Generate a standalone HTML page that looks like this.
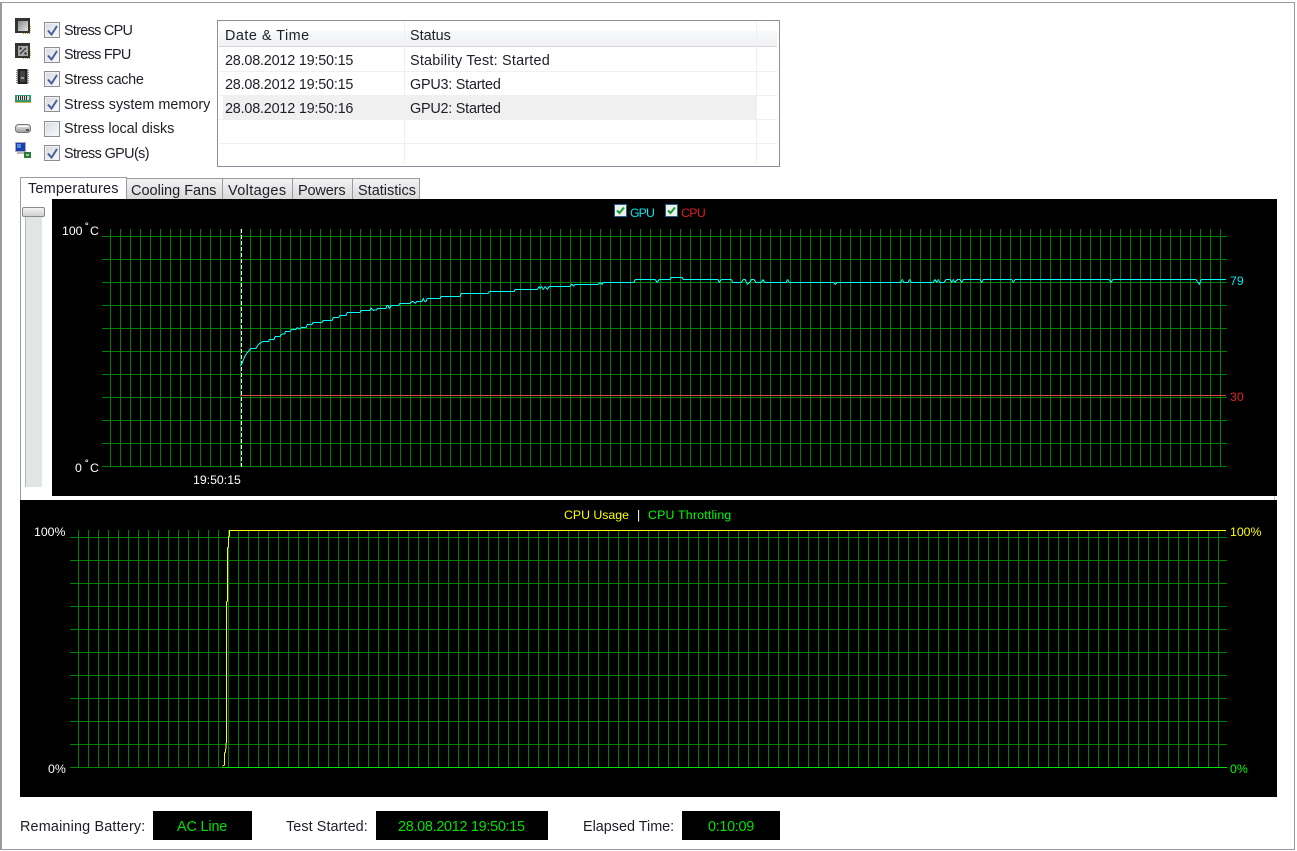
<!DOCTYPE html>
<html>
<head>
<meta charset="utf-8">
<style>
html,body{margin:0;padding:0;background:#fff}
#p{position:relative;width:1297px;height:851px;overflow:hidden;background:#fff;font-family:"Liberation Sans",sans-serif;color:#1e1e28}
#p div,#p span.t,#p svg{position:absolute}
.frame{left:0;top:2px;width:1292px;height:846px;border:1px solid #9a9aa4;border-left-width:2px}
.t{white-space:nowrap;line-height:20px;font-size:14.4px}
.s{white-space:nowrap;line-height:16px;font-size:12.3px;color:#fff}
.cb{left:44px;width:14px;height:14px;border:1px solid #8e8f8f;background:linear-gradient(135deg,#d5d9df,#eef1f4 70%,#fafafa);box-shadow:inset 0 0 0 1px #f2f2f2}
.blk{background:#000}
.hg{background:repeating-linear-gradient(180deg,#008000 0 1px,transparent 1px 23px)}
.vg{background:repeating-linear-gradient(90deg,#008000 0 1px,transparent 1px 10px)}
.tab{top:178px;height:21px;border:1px solid #9a9aa4;border-bottom:0;box-sizing:border-box;background:linear-gradient(180deg,#f2f2f2,#d9d9d9)}
.lg{top:204px;width:11px;height:11px;border:1px solid #2b5a8c;background:#e9f1ea}
</style>
</head>
<body>
<div id="p">
<div class="frame"></div>

<!-- side icons -->
<svg style="left:15px;top:18px" width="16" height="16" viewBox="0 0 16 16"><defs><linearGradient id="g1" x1="0" y1="0" x2="1" y2="1"><stop offset="0" stop-color="#8a8a8a"/><stop offset="1" stop-color="#e4e4e4"/></linearGradient></defs><rect width="15" height="15" fill="#333"/><rect x="3" y="3" width="10" height="10" fill="url(#g1)"/><path d="M15.5 8V14M8 15.5H15" stroke="#d99a2a" stroke-dasharray="1 1"/></svg>
<svg style="left:15px;top:43px" width="16" height="16" viewBox="0 0 16 16"><rect width="15" height="15" fill="#333"/><rect x="3" y="3" width="10" height="10" fill="#a8a8a8"/><path d="M5 11L11 5M5 5h1v1H5zM10 10h1v1h-1z" stroke="#222" fill="none"/><path d="M15.5 8V14M8 15.5H15" stroke="#c9a04a" stroke-dasharray="1 1"/></svg>
<svg style="left:16px;top:69px" width="14" height="16" viewBox="0 0 14 16"><rect x="1.5" width="10" height="15" fill="#222"/><rect x="4" y="2" width="5" height="11" fill="#444"/><rect x="5" y="8" width="3" height="2" fill="#999"/><path d="M.5 1V15M12.5 1V15" stroke="#888" stroke-dasharray="1 1"/></svg>
<svg style="left:15px;top:95px" width="16" height="9" viewBox="0 0 16 9"><rect width="16" height="8" fill="#2f9a6a"/><rect x="2" y="1" width="12" height="4" fill="#ddd"/><path d="M3.5 1V5M5.5 1V5M7.5 1V5M9.5 1V5M11.5 1V5" stroke="#333"/><rect y="7" width="16" height="1" fill="#c8b050"/></svg>
<svg style="left:15px;top:124px" width="16" height="10" viewBox="0 0 16 10"><defs><linearGradient id="g2" x1="0" y1="0" x2="0" y2="1"><stop offset="0" stop-color="#eee"/><stop offset="1" stop-color="#999"/></linearGradient></defs><rect x=".5" y=".5" width="15" height="8" rx="3" fill="url(#g2)" stroke="#777"/><rect x="3" y="2" width="10" height="1" fill="#fff"/><rect x="11" y="5" width="3" height="2" fill="#555"/></svg>
<svg style="left:15px;top:142px" width="16" height="16" viewBox="0 0 16 16"><rect x=".5" y=".5" width="10" height="9" fill="#1a3fb0" stroke="#aab"/><rect x="2" y="2" width="4" height="4" fill="#5a8ae0"/><rect x="2" y="10" width="8" height="2" fill="#bbb"/><rect x="9" y="10" width="7" height="6" fill="#2a7a3a"/><rect x="11" y="12" width="3" height="2" fill="#9c9"/></svg>

<!-- checkboxes -->
<div class="cb" style="top:22px"><svg style="left:2px;top:2px" width="11" height="11" viewBox="0 0 11 11"><path d="M1 5.5L4.5 9.5L10 1" fill="none" stroke="#4a5f9b" stroke-width="2"/></svg></div>
<div class="cb" style="top:47px"><svg style="left:2px;top:2px" width="11" height="11" viewBox="0 0 11 11"><path d="M1 5.5L4.5 9.5L10 1" fill="none" stroke="#4a5f9b" stroke-width="2"/></svg></div>
<div class="cb" style="top:71px"><svg style="left:2px;top:2px" width="11" height="11" viewBox="0 0 11 11"><path d="M1 5.5L4.5 9.5L10 1" fill="none" stroke="#4a5f9b" stroke-width="2"/></svg></div>
<div class="cb" style="top:96px"><svg style="left:2px;top:2px" width="11" height="11" viewBox="0 0 11 11"><path d="M1 5.5L4.5 9.5L10 1" fill="none" stroke="#4a5f9b" stroke-width="2"/></svg></div>
<div class="cb" style="top:121px"></div>
<div class="cb" style="top:145px"><svg style="left:2px;top:2px" width="11" height="11" viewBox="0 0 11 11"><path d="M1 5.5L4.5 9.5L10 1" fill="none" stroke="#4a5f9b" stroke-width="2"/></svg></div>

<span class="t" style="left:64px;top:21px;letter-spacing:-.7px">Stress CPU</span>
<span class="t" style="left:64px;top:45px;letter-spacing:-.7px">Stress FPU</span>
<span class="t" style="left:64px;top:70px;letter-spacing:-.3px">Stress cache</span>
<span class="t" style="left:64px;top:95px">Stress system memory</span>
<span class="t" style="left:64px;top:119px;letter-spacing:-.05px">Stress local disks</span>
<span class="t" style="left:64px;top:144px;letter-spacing:-.6px">Stress GPU(s)</span>

<!-- log table -->
<div style="left:217px;top:20px;width:561px;height:145px;border:1px solid #8e8e98;background:#fff"></div>
<div style="left:219px;top:31px;width:558px;height:15px;background:linear-gradient(180deg,#f8f9fa,#f0f1f3)"></div>
<div style="left:219px;top:46px;width:558px;height:1px;background:#d5d5d8"></div>
<div style="left:223px;top:96px;width:533px;height:24px;background:#f0f0f0"></div>
<div style="left:219px;top:71px;width:558px;height:1px;background:#f0f0f0"></div>
<div style="left:219px;top:95px;width:558px;height:1px;background:#f0f0f0"></div>
<div style="left:219px;top:119px;width:558px;height:1px;background:#f0f0f0"></div>
<div style="left:219px;top:143px;width:558px;height:1px;background:#f0f0f0"></div>
<div style="left:404px;top:22px;width:1px;height:142px;background:#efeff1"></div>
<div style="left:756px;top:22px;width:1px;height:142px;background:#efeff1"></div>
<span class="t" style="left:225px;top:26px;letter-spacing:.5px">Date &amp; Time</span>
<span class="t" style="left:410px;top:26px">Status</span>
<span class="t" style="left:225px;top:51px;letter-spacing:-.2px">28.08.2012 19:50:15</span>
<span class="t" style="left:410px;top:51px;letter-spacing:.22px">Stability Test: Started</span>
<span class="t" style="left:225px;top:75px;letter-spacing:-.2px">28.08.2012 19:50:15</span>
<span class="t" style="left:410px;top:75px;letter-spacing:-.23px">GPU3: Started</span>
<span class="t" style="left:225px;top:99px;letter-spacing:-.2px">28.08.2012 19:50:16</span>
<span class="t" style="left:410px;top:99px;letter-spacing:-.23px">GPU2: Started</span>

<!-- tabs -->
<div class="tab" style="left:126px;width:97px"></div>
<div class="tab" style="left:222px;width:71px"></div>
<div class="tab" style="left:292px;width:61px"></div>
<div class="tab" style="left:352px;width:68px"></div>
<div style="left:20px;top:177px;width:107px;height:24px;border:1px solid #9a9aa4;border-bottom:0;box-sizing:border-box;background:#fff"></div>
<div style="left:20px;top:177px;width:1px;height:323px;background:#9a9aa4"></div>
<span class="t" style="left:28px;top:179px;font-size:14.5px;letter-spacing:.17px">Temperatures</span>
<span class="t" style="left:131px;top:181px;font-size:14.5px">Cooling Fans</span>
<span class="t" style="left:228px;top:181px;font-size:14.5px;letter-spacing:.35px">Voltages</span>
<span class="t" style="left:298px;top:181px;font-size:14.5px;letter-spacing:-.15px">Powers</span>
<span class="t" style="left:358px;top:181px;font-size:14.5px">Statistics</span>

<!-- slider -->
<div style="left:25px;top:217px;width:17px;height:270px;background:#e2e5e5;border-left:1px solid #b4b6b8;box-sizing:border-box"></div>
<div style="left:22px;top:207px;width:23px;height:10px;border:1px solid #8a8a8a;border-radius:2px;box-sizing:border-box;background:linear-gradient(180deg,#f4f4f4,#cfcfcf)"></div>

<!-- chart 1 -->
<div class="blk" style="left:52px;top:199px;width:1225px;height:297px"></div>
<div class="vg" style="left:110px;top:229px;width:1111px;height:238px"></div>
<div class="hg" style="left:102px;top:236px;width:1125px;height:231px"></div>
<svg style="left:0;top:0" width="1297" height="851" shape-rendering="crispEdges">
<line x1="241" y1="395.5" x2="1226" y2="395.5" stroke="#d84848"/>
<line x1="241.5" y1="229" x2="241.5" y2="467" stroke="#fff" stroke-dasharray="4 2"/>
<polyline fill="none" stroke="#00ffff" points="240.7,366 242.7,361.7 244.7,356.7 247.3,352.7 250.7,348.7 256,348.3 258.7,344 262.7,341.7 268.7,341.3 269.3,339.7 274,339.3 275.3,336.7 280,336.7 281.3,334.3 284.7,334 285.3,331.7 290,331.7 291.3,329.7 296,329.3 297.3,327.7 299.3,329 301.3,327.7 306,327.7 307.3,324.7 312,324.3 313.3,322.3 322,322.3 323.3,320.3 332,320.3 333.3,317.7 338.7,317.3 340,315.3 346,315.3 347.3,312.3 360,312.3 361.3,310.3 370,310.3 371.3,308.3 373.3,310.3 376.7,310 377.3,308.3 386,308.3 386.7,305.7 388,305.7 389.3,308.3 391.3,305.3 398.7,305.3 400,303.3 410,303.3 412,301.3 413.3,301.7 415.3,303.3 417.3,301.3 422,301.3 423.3,298.7 424.7,301.3 426,301.3 427.3,298.3 440,298.3 441.3,296.3 460,296.3 461.3,293.7 488,293.7 489.3,291.7 514,291.7 515.3,289.3 537.3,289.3 539.3,286.7 540,288.3 541.7,286.7 543.3,289.3 545.3,286.7 547.3,289.3 549.3,286.3 570,286.3 571.7,284.3 573.3,286 575.3,284.3 598.3,284.3 600,282.3 602,284.3 603.3,282.3 634,282.3 635.3,279.7 655.3,279.7 657.3,282.3 659.3,279.3 670,279.3 671.3,277.3 682,277.3 683.3,279.7 718,279.7 719.3,282.3 721.3,279.7 731.3,279.7 732.7,282.3 741.3,282.3 743.3,279.7 745.3,279.7 747.3,284.3 750,282.3 751.3,279.7 754,279.7 756,282.3 761.3,282.3 763,279.7 764.7,282.3 786,282.3 787.7,279.7 789.3,282.3 833.3,282.3 835.3,284.3 837.3,282.3 900.7,282.3 902.3,279.7 904,282.3 908,282.3 909.7,279.7 911.3,282.3 933.3,282.3 935,279.7 936.7,282.3 938.3,279.7 940,282.3 944,282.3 946,279.7 950,279.7 951.7,282.3 953.3,279.7 955,282.3 957.3,279.7 960,279.7 961.7,282.3 963.3,279.7 980,279.7 981.7,282.3 983.3,279.7 1011.7,279.7 1013.3,282.3 1015,279.7 1109.3,279.7 1111,282.3 1112.7,279.7 1196,279.7 1199.3,284.3 1201.3,279.7 1226,279.7"/>
</svg>
<div class="lg" style="left:614px"><svg style="left:1px;top:1px" width="9" height="9" viewBox="0 0 9 9"><path d="M1 4.5L3.5 7L8 1.5" fill="none" stroke="#1f9a2c" stroke-width="2"/></svg></div>
<div class="lg" style="left:665px"><svg style="left:1px;top:1px" width="9" height="9" viewBox="0 0 9 9"><path d="M1 4.5L3.5 7L8 1.5" fill="none" stroke="#1f9a2c" stroke-width="2"/></svg></div>
<span class="t s" style="left:630px;top:205px;color:#00e8f0;letter-spacing:-.9px">GPU</span>
<span class="t s" style="left:681px;top:205px;color:#e01e1e;letter-spacing:-.6px">CPU</span>
<span class="t s" style="left:62px;top:223px">100</span>
<span class="t s" style="left:85px;top:220px">˚</span>
<span class="t s" style="left:90px;top:223px">C</span>
<span class="t s" style="left:75px;top:460px">0</span>
<span class="t s" style="left:85px;top:457px">˚</span>
<span class="t s" style="left:90px;top:460px">C</span>
<span class="t s" style="left:193px;top:472px">19:50:15</span>
<span class="t s" style="left:1230px;top:273px;color:#00e8f0">79</span>
<span class="t s" style="left:1230px;top:389px;color:#e82020">30</span>

<div style="left:1274px;top:496px;width:1px;height:4px;background:#c8c8c8"></div>

<!-- chart 2 -->
<div class="blk" style="left:20px;top:500px;width:1257px;height:297px"></div>
<div class="vg" style="left:78px;top:530px;width:1141px;height:238px"></div>
<div class="hg" style="left:70px;top:537px;width:1157px;height:231px"></div>
<svg style="left:0;top:0" width="1297" height="851" shape-rendering="crispEdges">
<line x1="222" y1="767.5" x2="1227" y2="767.5" stroke="#00e000"/>
<polyline fill="none" stroke="#ffff00" points="222.5,766 224.5,765 224.5,753 225.5,752 226.5,740 226.5,602 227.5,601 227.5,548 228.5,547 228.5,537 229.5,536 229.5,530.5 1226,530.5"/>
</svg>
<span class="t s" style="left:564px;top:507px;color:#ffff00">CPU Usage</span>
<span class="t s" style="left:637px;top:507px">|</span>
<span class="t s" style="left:648px;top:507px;color:#00ff00;letter-spacing:.22px">CPU Throttling</span>
<span class="t s" style="left:34px;top:524px">100%</span>
<span class="t s" style="left:48px;top:761px">0%</span>
<span class="t s" style="left:1230px;top:524px;color:#ffff00">100%</span>
<span class="t s" style="left:1230px;top:761px;color:#00ff00">0%</span>

<!-- bottom -->
<span class="t" style="left:20px;top:817px;letter-spacing:.17px">Remaining Battery:</span>
<div class="blk" style="left:153px;top:811px;width:99px;height:29px"></div>
<span class="t" style="left:177px;top:817px;color:#00e000;letter-spacing:-.15px">AC Line</span>
<span class="t" style="left:286px;top:817px;letter-spacing:.08px">Test Started:</span>
<div class="blk" style="left:376px;top:811px;width:172px;height:29px"></div>
<span class="t" style="left:398px;top:817px;color:#00e000;letter-spacing:-.28px">28.08.2012 19:50:15</span>
<span class="t" style="left:583px;top:817px">Elapsed Time:</span>
<div class="blk" style="left:682px;top:811px;width:98px;height:29px"></div>
<span class="t" style="left:708px;top:817px;color:#00e000;letter-spacing:-.3px">0:10:09</span>
</div>
</body>
</html>
